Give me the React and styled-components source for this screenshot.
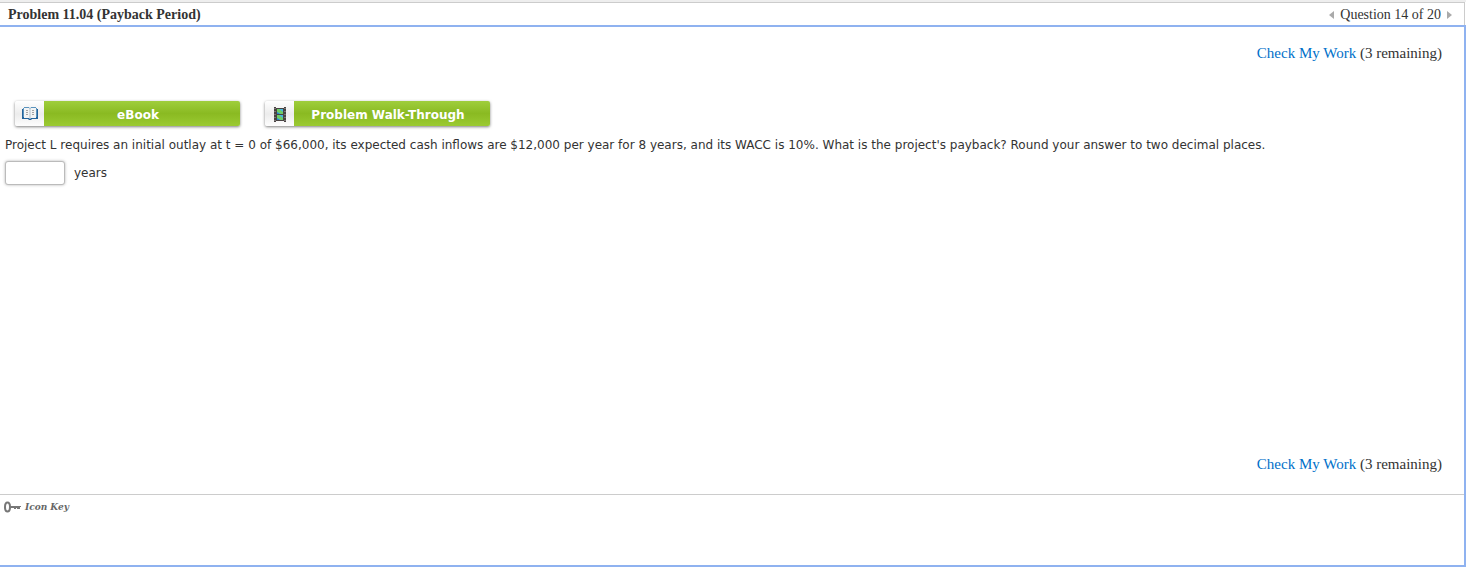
import styled, { createGlobalStyle } from "styled-components";
import React from "react";
import { useState } from "react";

const GlobalStyle = createGlobalStyle`
  body {
    margin: 0;
    background: #fff;
    color: #333;
    font-family: "DejaVu Sans", sans-serif;
    font-size: 12px;
  }

  * {
    box-sizing: border-box;
  }
`;

const Container = styled.div`
  display: flex;
  flex-direction: column;
  min-height: 100vh;
  padding-bottom: 1px;
  border-top: 2px solid #eee;
`;

const Header = styled.header`
  display: flex;
  align-items: center;
  justify-content: space-between;
  height: 23px;
  margin-right: 1px;
  padding: 2px 12px 0 8px;
  border-top: 1px solid #ccc;
  border-right: 1px solid #ccc;
  font-family: "Liberation Serif", serif;
  font-size: 14px;
`;

const Title = styled.h1`
  margin: 0;
  font-size: 14px;
  line-height: 20px;
`;

const Pager = styled.nav`
  display: flex;
  align-items: center;
  gap: 6px;
  line-height: 20px;
`;

const PagerButton = styled.button`
  display: flex;
  padding: 0;
  border: 0;
  background: none;
`;

const Panel = styled.main`
  display: flex;
  flex: 1;
  flex-direction: column;
  padding-top: 16px;
  border: 2px solid #8fb2f0;
  border-left: 0;
`;

const CheckRow = styled.div`
  padding: 0 22px;
  font-family: "Liberation Serif", serif;
  font-size: 15px;
  line-height: 20px;
  text-align: right;
`;

const CheckLink = styled.a`
  color: #0070c9;
  text-decoration: none;
`;

const Question = styled.section`
  flex: 1;
  padding: 38px 5px 0;
`;

const Resources = styled.div`
  display: flex;
  gap: 25px;
  padding: 0 10px;
`;

const ResourceButton = styled.button`
  display: flex;
  width: 225px;
  height: 25px;
  padding: 0;
  overflow: hidden;
  border: 0;
  border-radius: 2px;
  box-shadow: 0 1px 3px rgba(0, 0, 0, 0.5);
  color: #fff;
  font-family: "DejaVu Sans", sans-serif;
  font-size: 12px;
  font-weight: 700;
  line-height: 28px;
`;

const ResourceIcon = styled.span`
  display: flex;
  align-items: center;
  justify-content: center;
  width: 29px;
  height: 26px;
  background: linear-gradient(#fff, #ececec 50%, #fff);
`;

const ResourceLabel = styled.span`
  flex: 1;
  padding-right: 8px;
  background: linear-gradient(#9fce3c, #8aba22 50%, #9bca32);
`;

const Text = styled.p`
  margin: 9px 0 6px;
  line-height: 20px;
`;

const Answer = styled.label`
  display: flex;
  align-items: center;
  gap: 9px;
`;

const AnswerInput = styled.input`
  width: 60px;
  height: 24px;
  padding: 0 4px;
  border: 1px solid #bbb;
  border-radius: 3px;
  box-shadow: 0 0 3px rgba(0, 0, 0, 0.3);
  font-size: 12px;
`;

const Footer = styled.footer`
  height: 71px;
  margin-top: 20px;
  padding: 2px 4px;
  border-top: 1px solid #ccc;
`;

const IconKey = styled.button`
  display: flex;
  align-items: center;
  gap: 4px;
  padding: 0;
  border: 0;
  background: none;
  color: #666;
  font-family: "DejaVu Serif", serif;
  font-size: 9px;
  font-style: italic;
  font-weight: 700;
  line-height: 20px;
`;

const BookIcon = () => (
  <svg width="16" height="14" viewBox="0 0 16 14" aria-hidden="true">
    <path d="M0 2h2v8h12V2h2v10h-6l-1 1H7l-1-1H0z" fill="#23639b" />
    <path d="M2 1h5l1 1 1-1h5v10H9l-1 1-1-1H2z" fill="#f3f4f4" />
    <path d="M2 .5h5l1 1 1-1h5M1.5 1v9M14.5 1v9" fill="none" stroke="#5b93bd" />
    <path d="M8 2v9" stroke="#b5c3cd" />
    <path d="M4 3.5h2M4 5.5h2M4 7.5h2M10 3.5h2M10 5.5h2M10 7.5h2" stroke="#a5a5a5" />
  </svg>
);

const FilmIcon = () => (
  <svg width="12" height="15" viewBox="0 0 12 15" aria-hidden="true">
    <path d="M0 0h2v1h8V0h2v15h-2v-1H2v1H0z" fill="#494343" />
    <path d="M3 2h6v5H3zM3 8h6v5H3z" fill="#48b5df" />
    <path d="M3 2h2l4 3v2H7L3 5zM3 8h2l4 3v2H7l-4-2z" fill="#6fce62" />
    <path d="M3 5l3 2H3zM3 11l3 2H3z" fill="#2786c8" />
    <path d="M1 1v13M11 1v13" stroke="#aaa" strokeDasharray="1 2" />
  </svg>
);

const KeyIcon = () => (
  <svg width="17" height="12" viewBox="0 0 17 12" aria-hidden="true">
    <ellipse cx="3.5" cy="6" rx="2.5" ry="4.5" fill="none" stroke="#777" strokeWidth="2" />
    <path d="M6 5h11v1H6zM6 6h10v1H6zM10 7h2v1h-2zM13 7h3v1h-3z" fill="#777" />
  </svg>
);

const CheckMyWork = ({ remaining }) => (
  <CheckRow>
    <CheckLink href="#check">Check My Work</CheckLink> ({remaining} remaining)
  </CheckRow>
);

const App = () => {
  const [answer, setAnswer] = useState("");

  return (
    <>
      <GlobalStyle />
      <Container>
        <Header>
          <Title>Problem 11.04 (Payback Period)</Title>
          <Pager aria-label="Questions">
            <PagerButton aria-label="Previous question">
              <svg width="5" height="8" viewBox="0 0 5 8">
                <path d="M5 0v8L0 4z" fill="#aaa" />
              </svg>
            </PagerButton>
            <span>Question 14 of 20</span>
            <PagerButton aria-label="Next question">
              <svg width="5" height="8" viewBox="0 0 5 8">
                <path d="M0 0v8l5-4z" fill="#aaa" />
              </svg>
            </PagerButton>
          </Pager>
        </Header>
        <Panel>
          <CheckMyWork remaining={3} />
          <Question>
            <Resources>
              <ResourceButton>
                <ResourceIcon>
                  <BookIcon />
                </ResourceIcon>
                <ResourceLabel>eBook</ResourceLabel>
              </ResourceButton>
              <ResourceButton>
                <ResourceIcon>
                  <FilmIcon />
                </ResourceIcon>
                <ResourceLabel>Problem Walk-Through</ResourceLabel>
              </ResourceButton>
            </Resources>
            <Text>
              Project L requires an initial outlay at t = 0 of $66,000, its expected cash inflows are $12,000 per year
              for 8 years, and its WACC is 10%. What is the project's payback? Round your answer to two decimal places.
            </Text>
            <Answer>
              <AnswerInput value={answer} onChange={(e) => setAnswer(e.target.value)} />
              years
            </Answer>
          </Question>
          <CheckMyWork remaining={3} />
          <Footer>
            <IconKey>
              <KeyIcon />
              Icon Key
            </IconKey>
          </Footer>
        </Panel>
      </Container>
    </>
  );
};

export default App;
